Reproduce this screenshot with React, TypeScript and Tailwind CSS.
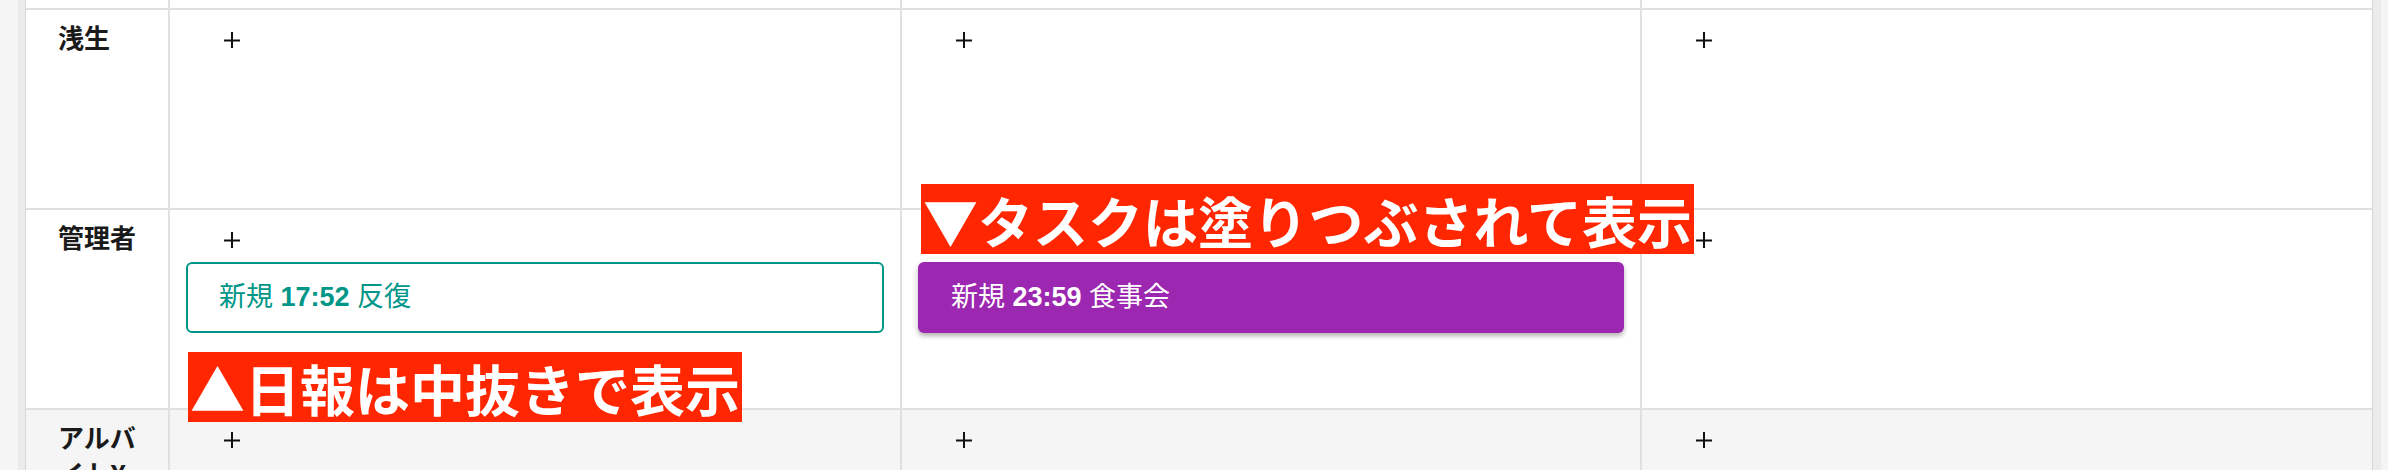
import React from 'react'

const FONT = "font-['Liberation_Sans','Noto_Sans_CJK_JP',sans-serif]"

type Item = { kind: 'report' | 'task'; time: string; title: string }
type Row = { name: string; shaded?: boolean; cells: Item[][] }

const rows: Row[] = [
  { name: '浅生', cells: [[], [], []] },
  {
    name: '管理者',
    cells: [
      [{ kind: 'report', time: '17:52', title: '反復' }],
      [{ kind: 'task', time: '23:59', title: '食事会' }],
      [],
    ],
  },
  { name: 'アルバイトX', shaded: true, cells: [[], [], []] },
]

const colWidths = ['w-[732px]', 'w-[740px]', 'w-[732px]']

function Plus() {
  return (
    <svg width="16" height="16" viewBox="0 0 16 16" className="block">
      <path d="M0 8.5H16M8 0V16" stroke="#111" strokeWidth="2" />
    </svg>
  )
}

function Card({ item }: { item: Item }) {
  if (item.kind === 'report') {
    return (
      <div className="mx-4 mt-[14px] h-[71px] rounded-[6px] border-2 border-[#009688] pl-[31px] flex items-center text-[27px] text-[#009688]">
        <span>新規 <b className="font-bold">{item.time}</b> {item.title}</span>
      </div>
    )
  }
  return (
    <div className="mx-4 mt-[14px] h-[71px] rounded-[6px] bg-[#9c27b0] pl-[33px] flex items-center text-[27px] text-white shadow-[0_3px_5px_rgba(0,0,0,0.3)]">
      <span>新規 <b className="font-bold">{item.time}</b> {item.title}</span>
    </div>
  )
}

function Label({ text, className }: { text: string; className: string }) {
  return (
    <div
      className={`absolute z-10 bg-[#ff2600] px-[2px] text-[55px] leading-[70px] font-bold text-white whitespace-nowrap font-['Noto_Sans_CJK_JP',sans-serif] ${className}`}
    >
      {text}
    </div>
  )
}

export default function App() {
  return (
    <div className={`h-[470px] w-[2388px] overflow-hidden bg-[#f5f5f5] flex ${FONT}`}>
      <div className="w-[18px] shrink-0" />
      <div className="w-[7px] shrink-0 bg-[#ebebeb]" />
      <div className="w-[2348px] shrink-0 bg-white border-x border-[#d7d7d7]">
        {/* tail of the row above */}
        <div className="flex h-[8px]">
          <div className="w-[142px]" />
          {colWidths.map((w, i) => (
            <div key={i} className={`${w} border-l-2 border-[#e0e0e0]`} />
          ))}
        </div>

        {rows.map((row, r) => (
          <div
            key={r}
            className={`flex h-[200px] border-t-2 border-[#e0e0e0] ${row.shaded ? 'bg-[#f5f5f5]' : ''}`}
          >
            <div className="w-[142px] shrink-0 pl-[32px] pr-[30px] pt-[9px] text-[26px] leading-[36px] font-bold text-[#1a1a1a] font-['Noto_Sans_CJK_JP',sans-serif]">
              {row.name}
            </div>
            {row.cells.map((items, c) => (
              <div key={c} className={`${colWidths[c]} shrink-0 relative border-l-2 border-[#e0e0e0] pt-[22px]`}>
                <div className="ml-[54px]">
                  <Plus />
                </div>
                {items.map((item, k) => (
                  <Card key={k} item={item} />
                ))}
                {r === 1 && c === 0 && (
                  <Label text="▲日報は中抜きで表示" className="left-[18px] top-[142px]" />
                )}
                {r === 1 && c === 1 && (
                  <Label text="▼タスクは塗りつぶされて表示" className="left-[19px] top-[-26px]" />
                )}
              </div>
            ))}
          </div>
        ))}
      </div>
      <div className="w-[8px] shrink-0 bg-[#ebebeb]" />
    </div>
  )
}
